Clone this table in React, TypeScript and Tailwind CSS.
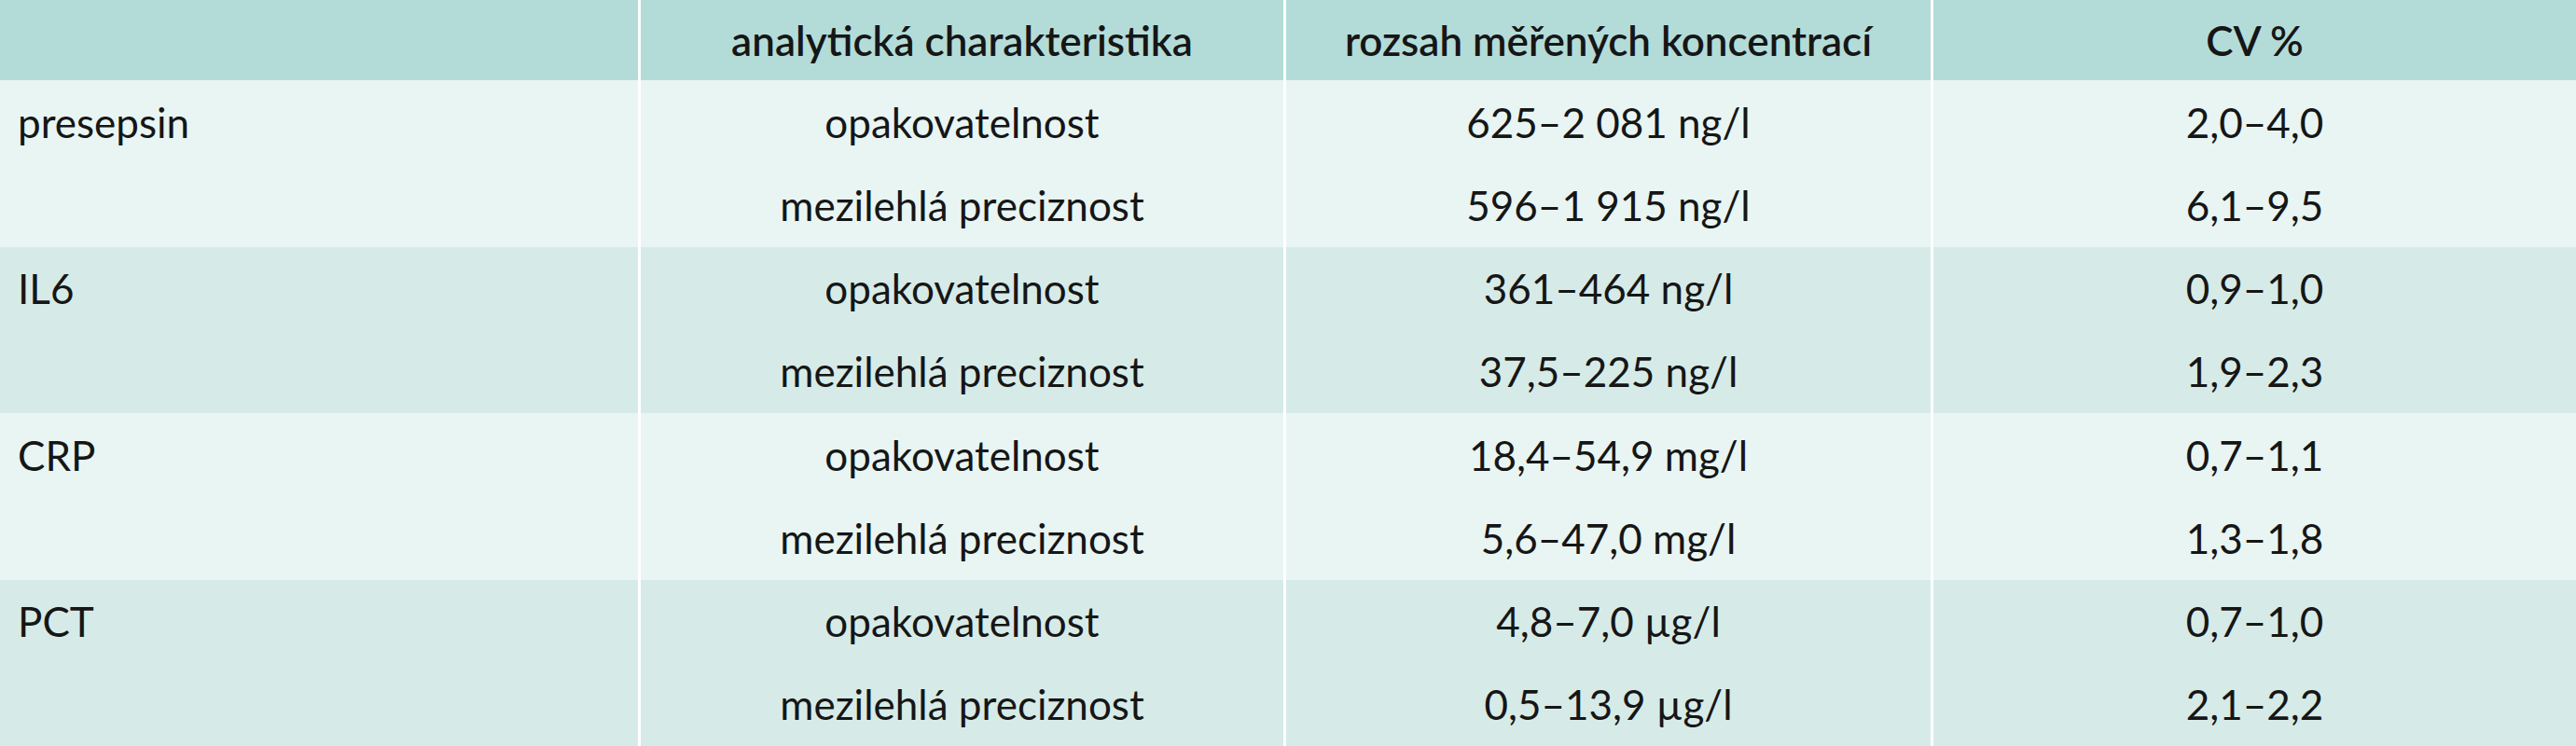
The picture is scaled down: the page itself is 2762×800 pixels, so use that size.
import React from "react";

const groups = [
  {
    name: "presepsin",
    bg: "bg-[#e8f5f3]",
    rows: [
      ["opakovatelnost", "625–2 081 ng/l", "2,0–4,0"],
      ["mezilehlá preciznost", "596–1 915 ng/l", "6,1–9,5"],
    ],
  },
  {
    name: "IL6",
    bg: "bg-[#d6ebe8]",
    rows: [
      ["opakovatelnost", "361–464 ng/l", "0,9–1,0"],
      ["mezilehlá preciznost", "37,5–225 ng/l", "1,9–2,3"],
    ],
  },
  {
    name: "CRP",
    bg: "bg-[#e8f5f3]",
    rows: [
      ["opakovatelnost", "18,4–54,9 mg/l", "0,7–1,1"],
      ["mezilehlá preciznost", "5,6–47,0 mg/l", "1,3–1,8"],
    ],
  },
  {
    name: "PCT",
    bg: "bg-[#d6ebe8]",
    rows: [
      ["opakovatelnost", "4,8–7,0 µg/l", "0,7–1,0"],
      ["mezilehlá preciznost", "0,5–13,9 µg/l", "2,1–2,2"],
    ],
  },
];

export default function App() {
  return (
    <div
      className="w-[2762px] h-[800px] bg-white text-[#161616] text-[44px] leading-none"
      style={{ fontFamily: "Lato, 'Noto Sans', sans-serif" }}
    >
      <div className="grid grid-cols-[684px_689px_691px_689px] gap-x-[3px]">
        {/* header */}
        <div className="h-[86px] bg-[#b3dcd9]" />
        <div className="h-[86px] bg-[#b3dcd9] flex items-center justify-center font-semibold">
          analytická charakteristika
        </div>
        <div className="h-[86px] bg-[#b3dcd9] flex items-center justify-center font-semibold">
          rozsah měřených koncentrací
        </div>
        <div className="h-[86px] bg-[#b3dcd9] flex items-center justify-center font-semibold">
          CV %
        </div>
        {groups.map((g) => (
          <React.Fragment key={g.name}>
            <div className={`${g.bg} h-[178.5px] flex flex-col`}>
              <div className="h-[89.25px] flex items-center pl-[19px]">{g.name}</div>
            </div>
            {[0, 1, 2].map((c) => (
              <div key={c} className={`${g.bg} h-[178.5px] flex flex-col`}>
                {g.rows.map((r, i) => (
                  <div key={i} className="h-[89.25px] flex items-center justify-center">
                    {r[c]}
                  </div>
                ))}
              </div>
            ))}
          </React.Fragment>
        ))}
      </div>
    </div>
  );
}
